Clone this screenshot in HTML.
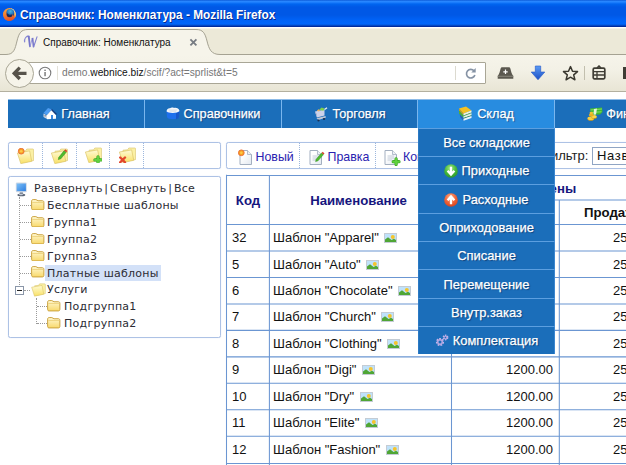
<!DOCTYPE html>
<html lang="ru">
<head>
<meta charset="utf-8">
<title>Справочник: Номенклатура</title>
<style>
html,body{margin:0;padding:0;}
body{width:626px;height:465px;overflow:hidden;position:relative;background:#fff;font-family:"Liberation Sans",sans-serif;}
.abs{position:absolute;}
#titlebar{left:0;top:0;width:626px;height:27px;background:linear-gradient(to bottom,#0a58d6 0px,#2a88ff 1.3px,#1a7cfc 2.5px,#0066f0 4px,#0058e6 7px,#0058e6 15px,#0062f6 20px,#0066fa 24px,#0450d0 25.2px,#002a9c 26.4px,#0030a8 27px);}
#titletext{left:20px;top:8px;color:#fff;font-weight:bold;font-size:12.7px;line-height:15px;white-space:nowrap;text-shadow:1px 1px 0 #0a2a8c;transform:scaleX(.933);transform-origin:0 0;}
#tabstrip{left:0;top:27px;width:626px;height:28px;background:linear-gradient(to bottom,#ffffff 0,#ffffff 1px,#f3f1e6 1.6px,#ece9d8 2.2px,#ece9d8 100%);}
#tabtext{left:43px;top:37px;font-size:10px;line-height:12px;color:#111;white-space:nowrap;}
#navbar{left:0;top:55px;width:626px;height:37px;background:linear-gradient(to bottom,#f6f4ea 0,#f3f1e6 40%,#e8e5d5 100%);border-bottom:1px solid #b3b0a0;box-sizing:border-box;}
#urlbar{left:28px;top:62px;width:458px;height:22px;background:#fff;border:1px solid #a9a696;box-sizing:border-box;border-radius:1px;}
#back{left:4.5px;top:58.5px;width:29px;height:29px;border-radius:50%;background:#f6f4ea;border:1px solid #a9a695;box-sizing:border-box;}
#urltext{left:62px;top:67px;font-size:10.2px;line-height:12px;color:#777;white-space:nowrap;}
#urltext b{font-weight:normal;color:#111;}
/* page */
#menu{left:8px;top:99px;width:618px;height:29px;background:#1b6eba;border-top:1px solid #8dbbe8;box-sizing:border-box;}
.mi{position:absolute;top:0;height:28px;width:137px;box-sizing:border-box;border-right:1px solid #7ab6ee;color:#fff;font-size:12.7px;line-height:28px;text-align:center;white-space:nowrap;text-shadow:1px 1px 1px rgba(0,25,70,.55);-webkit-text-stroke:.25px #fff;}
.box{position:absolute;border-radius:2.5px;box-shadow:0 0 1px #c6d4ee;border:1px solid #adc2e5;box-sizing:border-box;background:#fff;}
.tb{position:absolute;top:0;height:100%;border-right:1px dotted #9db7dd;box-sizing:border-box;}
.tr{position:absolute;white-space:nowrap;line-height:17px;height:16px;font-family:"DejaVu Sans","Liberation Sans",sans-serif;font-size:11px;letter-spacing:.26px;color:#2b2b33;}
#grid{left:226px;top:175px;width:400px;height:290px;}
.tt{font-size:12.4px;line-height:16px;color:#2a22b0;white-space:nowrap;}
.pp{margin:0 1.7px;}
.hl{position:absolute;height:1px;background:#5b8fd3;}
.vl{position:absolute;width:1px;background:#5b8fd3;}
.c{position:absolute;font-size:13px;line-height:16px;color:#111;white-space:nowrap;}
.hd{position:absolute;font-size:13.2px;font-weight:bold;line-height:16px;color:#16167e;white-space:nowrap;}
#dd{left:418px;top:128px;width:137px;height:226px;background:#1b6eba;}
.di{position:absolute;left:0;width:137px;color:#fff;font-size:12.9px;text-align:center;white-space:nowrap;border-top:1px solid #5c9fe0;border-left:1px solid #2b79c4;border-right:1px solid #3a86cf;box-sizing:border-box;text-shadow:1px 1px 1px rgba(0,25,70,.55);-webkit-text-stroke:.25px #fff;}
</style>
</head>
<body>
<div id="titlebar" class="abs"></div>
<svg class="abs" style="left:1.600px;top:6.700px" width="15" height="15" viewBox="0 0 15 15">
  <defs>
    <radialGradient id="ffg" cx="0.5" cy="0.3" r="0.7"><stop offset="0" stop-color="#4ab4e0"/><stop offset="0.55" stop-color="#2278c0"/><stop offset="1" stop-color="#142a6c"/></radialGradient>
    <linearGradient id="ffo" x1="0.2" y1="0" x2="0.5" y2="1"><stop offset="0" stop-color="#f7a03a"/><stop offset="0.5" stop-color="#f07a2e"/><stop offset="1" stop-color="#e2522a"/></linearGradient>
    <linearGradient id="ffy" x1="0" y1="0" x2="0" y2="1"><stop offset="0" stop-color="#fdf6c8"/><stop offset="1" stop-color="#f4b63a"/></linearGradient>
  </defs>
  <circle cx="7.500" cy="7.500" r="6.400" fill="url(#ffo)"/>
  <path d="M9 1.300 A6.400 6.400 0 0 1 12.800 11 C12.800 7.500 11.800 4 9 1.300 Z" fill="url(#ffy)"/>
  <circle cx="8.300" cy="6" r="4" fill="url(#ffg)"/>
  <path d="M4.300 6.500 C5.500 6.200 6.500 6.800 7 7.800 C8 8 9.500 7.800 10.500 7 C10.800 9 9.500 10.600 7.500 10.600 C5.500 10.600 4.200 9 4.300 6.500 Z" fill="#1a2350" opacity=".85"/>
  <path d="M1.300 6 C1.800 3.800 3.200 2.400 4.800 1.900 C4.200 2.800 4.100 3.600 4.300 4.300 C4 5 3.900 5.800 4.300 6.500 C4.200 9 5.500 10.600 7.500 10.600 C9.500 10.600 10.800 9 10.500 7 C11.600 8 11.800 9.800 11 11.300 C10 13 8.300 13.900 6.500 13.800 C3.300 13.500 .9 10.500 1.300 6 Z" fill="url(#ffo)"/>
</svg>
<div id="titletext" class="abs">Справочник: Номенклатура - Mozilla Firefox</div>
<div id="tabstrip" class="abs"></div>
<svg class="abs" style="left:0;top:27px" width="240" height="28" viewBox="0 0 240 28">
  <path d="M0 27.500 H6 C14 27.500 15 22 17 14 C19 6 21 2.500 28 2.500 H196 C203 2.500 205 6 207 14 C209 22 211 27.500 220 27.500 H240 V28 H0 Z" fill="#f6f4ea"/>
  <path d="M0 27.500 H6 C14 27.500 15 22 17 14 C19 6 21 2.500 28 2.500 H196 C203 2.500 205 6 207 14 C209 22 211 27.500 220 27.500 H240" fill="none" stroke="#a5a292" stroke-width="1"/>
</svg>
<div class="abs" style="left:238px;top:54px;width:388px;height:1px;background:#a5a292"></div>
<svg class="abs" style="left:23px;top:35px" width="15" height="13" viewBox="0 0 15 13">
  <path d="M1.600 6.800 C1.300 3.500 3.300 1.300 5.200 1" fill="none" stroke="#8a8ad4" stroke-width="1.300" stroke-linecap="round"/>
  <path d="M4.700 1 L6.700 .8 L7.700 12 L6.200 12.200 Z" fill="#7676ca"/>
  <path d="M7 12 L9.300 3" stroke="#8f8fd8" stroke-width=".9" fill="none"/>
  <path d="M8.700 3 L10.400 2.800 L11.200 12 L9.800 12.200 Z" fill="#7676ca"/>
  <path d="M10.600 12 L14 1.800" stroke="#8080d0" stroke-width="1.100" fill="none" stroke-linecap="round"/>
</svg>
<div id="tabtext" class="abs">Справочник: Номенклатура</div>
<svg class="abs" style="left:189px;top:38px" width="9" height="9" viewBox="0 0 9 9"><path d="M1.400 1.400 L7.400 7.400 M7.400 1.400 L1.400 7.400" stroke="#777c83" stroke-width="1.800" fill="none"/></svg>
<div id="navbar" class="abs"></div>
<div id="urlbar" class="abs"></div>
<div class="abs" style="left:455px;top:66px;width:1px;height:14px;background:#dcdad0"></div>
<div class="abs" style="left:57px;top:66px;width:1px;height:14px;background:#e4e2d8"></div>
<div id="back" class="abs"></div>
<svg class="abs" style="left:12px;top:66px" width="16" height="15" viewBox="0 0 16 15"><path d="M7.800 1.600 L2.200 7.300 L7.800 13 M3 7.300 H14.500" fill="none" stroke="#57534b" stroke-width="3.300" stroke-linejoin="miter"/></svg>
<svg class="abs" style="left:38px;top:66px" width="14" height="14" viewBox="0 0 14 14"><circle cx="7" cy="7" r="5.800" fill="none" stroke="#7a7a7a" stroke-width="1.100"/><rect x="6.400" y="6" width="1.300" height="4.200" fill="#6a6a6a"/><rect x="6.400" y="3.600" width="1.300" height="1.400" fill="#6a6a6a"/></svg>
<div id="urltext" class="abs">demo.<b>webnice.biz</b>/scif/?act=sprlist&amp;t=5</div>
<svg class="abs" style="left:463.5px;top:66.5px" width="13" height="13" viewBox="0 0 14 14"><path d="M10.800 4.200 A4.600 4.600 0 1 0 11.700 8.600" fill="none" stroke="#8592a4" stroke-width="1.800"/><path d="M12.600 1.200 V6 H7.800 Z" fill="#8592a4"/></svg>
<svg class="abs" style="left:497px;top:66px" width="17" height="14" viewBox="0 0 17 14"><path d="M5.200 1.300 H11.800 C12.800 1.300 13.200 1.900 13.500 3 C14 5.500 14.800 8 16.300 10 V12.700 H.7 V10 C2.200 8 3 5.500 3.500 3 C3.800 1.900 4.200 1.300 5.200 1.300 Z" fill="#5b584f"/><rect x=".7" y="9.800" width="15.600" height=".9" fill="#8d8a7f"/><path d="M8.500 3.600 V8 M6.300 5.800 H10.700" stroke="#fff" stroke-width="1.200"/></svg>
<svg class="abs" style="left:530px;top:65px" width="16" height="16" viewBox="0 0 16 16"><defs><linearGradient id="dlg" x1="0" y1="0" x2="0" y2="1"><stop offset="0" stop-color="#5b9bf5"/><stop offset="1" stop-color="#1b4fc4"/></linearGradient></defs><path d="M5.300 1 H10.700 V7 H14.800 L8 14.800 L1.200 7 H5.300 Z" fill="url(#dlg)" stroke="#2458c8" stroke-width=".6"/></svg>
<svg class="abs" style="left:562px;top:65px" width="17" height="16" viewBox="0 0 17 16"><path d="M8.500 1.600 L10.500 6.200 L15.500 6.600 L11.700 9.900 L12.900 14.800 L8.500 12.200 L4.100 14.800 L5.300 9.900 L1.500 6.600 L6.500 6.200 Z" fill="none" stroke="#3a382f" stroke-width="1.500" stroke-linejoin="round"/></svg>
<div class="abs" style="left:584px;top:66px;width:1px;height:14px;background:#c2bfae"></div>
<svg class="abs" style="left:592px;top:65px" width="14" height="15" viewBox="0 0 14 15"><rect x="1.200" y="3.200" width="11.600" height="10.600" rx="1.200" fill="none" stroke="#3f3d35" stroke-width="1.700"/><path d="M5 3 L7 1 L9 3" fill="none" stroke="#3f3d35" stroke-width="1.500"/><path d="M2 6.700 H12 M2 10 H12 M5 6.700 V13" stroke="#3f3d35" stroke-width="1.300" fill="none"/></svg>
<div class="abs" style="left:623px;top:67px;width:3px;height:12px;background:#3f3d35"></div>

<div id="menu" class="abs">
  <div class="mi" style="left:0;width:137px"><svg width="15" height="13" viewBox="0 0 15 13" style="vertical-align:-2px;margin-right:4px"><path d="M1.500 6 L6 1 L10 2.500 L5 8 Z" fill="#4f9df2"/><path d="M1.500 6.500 L5 8.500 V12 L1.500 10 Z" fill="#d0d8e6"/><rect x="2.500" y="8" width="1.300" height="1.500" fill="#7a8698"/><path d="M5 8 L9.500 3 L14 8 V11.800 L5 12.300 Z" fill="#fff"/><rect x="9" y="8" width="2" height="4" fill="#3d8ae0"/><path d="M9.500 2.500 L14.500 7.500" stroke="#173a7a" stroke-width="1.200"/></svg>Главная</div>
  <div class="mi" style="left:137px;width:137px"><svg width="14" height="13" viewBox="0 0 14 13" style="vertical-align:-2px;margin-right:4px"><path d="M.5 4.500 C.5 2.500 13.500 2.500 13.500 4.500 L13 10 C12.500 13 1.500 13 1 10 Z" fill="#1f70ec"/><path d="M10 6 L13.500 4.500 L13 10 C12.800 11.300 11.500 12 10 12.300 Z" fill="#1858c8"/><path d="M.5 4.300 C.8 1.800 3 .8 4 1.300 C5 .3 7 .4 8 1 C10 .4 13 1.200 13.500 4 C12 6.500 2 6.500 .5 4.300 Z" fill="#f4f7fb"/><path d="M2.500 3 H11 M3.500 4.200 H10" stroke="#c8d0dc" stroke-width=".6"/></svg>Справочники</div>
  <div class="mi" style="left:274px;width:136px"><svg width="14" height="16" viewBox="0 0 14 16" style="vertical-align:-4px;margin-right:5px"><path d="M1 5.500 L10.500 3.500 L10.500 9.500 L3 11.500 Z" fill="#ccd2ea"/><path d="M1 5.500 L3 11.500 L3 8 Z" fill="#aab2d0"/><path d="M5 4 L7.500 1.500 L10.500 2.500 L9.500 4.800 Z" fill="#7ed048"/><path d="M2.800 4.800 L4.500 3.300 L6 4.200 L5 5.500 Z" fill="#f0b060"/><path d="M10.500 3.500 L13 1.800" stroke="#eef0f6" stroke-width="1.300"/><path d="M2.500 12.300 L11.500 10 L12 11.500 L4.500 14 Z" fill="#c2c8d6"/><circle cx="4.500" cy="14.500" r="1.100" fill="#1c3050"/><circle cx="10" cy="13" r="1.100" fill="#1c3050"/></svg>Торговля</div>
  <div class="mi" style="left:410px;width:137px;background:#288ce0"><svg width="15" height="16" viewBox="0 0 15 16" style="vertical-align:-4px;margin-right:4px"><path d="M1 2.500 L8 .5 L13.500 4.500 L5.500 7.500 Z" fill="#f4c224"/><path d="M1 2.500 L5.500 7.500 V9.500 L1 4.500 Z" fill="#d9a010"/><path d="M1 4.500 L5.500 9.500 V12 L1 7.500 Z" fill="#4caf38"/><path d="M1.500 8 L5.500 12 V14.800 L2.500 11.500 Z" fill="#2a62b8"/><path d="M5.500 7.500 L13.500 4.500 V6.500 L5.500 9.500 Z" fill="#f6f2dc"/><path d="M5.500 9.500 L13.500 6.500 V7.300 L5.500 10.300 Z" fill="#5aa838"/><path d="M5.500 10.300 L13.500 7.300 V9.300 L5.500 12 Z" fill="#e8f0e0"/><path d="M5.500 12 L13.500 9.300 V10 L5.500 12.800 Z" fill="#3a8a30"/><path d="M5.500 12.800 L13.500 10 V12 L5.500 14.800 Z" fill="#f0f4fa"/></svg>Склад</div>
  <div class="mi" style="left:547px;width:137px;border-right:none"><svg width="16" height="14" viewBox="0 0 16 14" style="vertical-align:-3px;margin-right:3px"><path d="M3 1.500 L15 .5 L15.500 5 L13 7.500 L4 8 Z" fill="#3fb82f"/><path d="M3.500 3 L15 2 M4 5.500 L14.500 4.800" stroke="#8ae070" stroke-width=".9"/><path d="M7 2 L10 1.500 L9 7.500 L6.500 7.800 Z" fill="#e4f4dc"/><ellipse cx="3.800" cy="12" rx="3.300" ry="1.800" fill="#d89a12"/><ellipse cx="3.800" cy="11.300" rx="3.300" ry="1.800" fill="#f8d040"/><ellipse cx="7" cy="10.200" rx="2.800" ry="1.500" fill="#d89a12"/><ellipse cx="7" cy="9.600" rx="2.800" ry="1.500" fill="#fbd84a"/><ellipse cx="4.300" cy="8" rx="2.500" ry="1.500" fill="#e8b020"/><ellipse cx="4.300" cy="6" rx="1.800" ry="1.300" fill="#f0c030"/></svg>Финансы</div>
</div>
<div class="box" style="left:8px;top:142px;width:213px;height:27px">
  <div class="tb" style="left:0px;width:34px"></div>
  <div class="tb" style="left:34px;width:34px"></div>
  <div class="tb" style="left:68px;width:33px"></div>
  <div class="tb" style="left:101px;width:34px"></div>
</div>
<svg class="abs" style="left:17.4px;top:147.6px" width="17" height="16" viewBox="0 0 17 16"><defs><linearGradient id="og" x1="0" y1="0" x2="0" y2="1"><stop offset="0" stop-color="#fffbd6"/><stop offset="1" stop-color="#f8e066"/></linearGradient></defs><path d="M4 3.200 L8.600 2.800 L9.800 1 L15.800 1 C16.300 1 16.600 1.300 16.600 1.800 L16.600 12.500 L5.500 14.800 Z" fill="#fbf0a4" stroke="#dcc878" stroke-width=".7"/><path d="M.4 5 L12.600 2.900 L14.800 13.300 L3.800 15.600 Z" fill="url(#og)" stroke="#dcc56a" stroke-width=".7"/><circle cx="4.200" cy="3.200" r="2.900" fill="#f7a01f" stroke="#ea6e3c" stroke-width=".9"/><circle cx="4.200" cy="3.200" r="1.300" fill="#fcc94a"/></svg>
<svg class="abs" style="left:51px;top:147.6px" width="17" height="16" viewBox="0 0 17 16"><defs><linearGradient id="og" x1="0" y1="0" x2="0" y2="1"><stop offset="0" stop-color="#fffbd6"/><stop offset="1" stop-color="#f8e066"/></linearGradient></defs><path d="M4 3.200 L8.600 2.800 L9.800 1 L15.800 1 C16.300 1 16.600 1.300 16.600 1.800 L16.600 12.500 L5.500 14.800 Z" fill="#fbf0a4" stroke="#dcc878" stroke-width=".7"/><path d="M.4 5 L12.600 2.900 L14.800 13.300 L3.800 15.600 Z" fill="url(#og)" stroke="#dcc56a" stroke-width=".7"/><path d="M7.800 9.300 L13.200 2.600 L15.200 4.300 L9.800 10.800 L7.300 11.600 Z" fill="#4fbb2e" stroke="#2f8a1c" stroke-width=".5"/><path d="M13.200 2.600 L14.400 1.200 L16.400 2.900 L15.200 4.300 Z" fill="#d8402a"/></svg>
<svg class="abs" style="left:84.5px;top:147px" width="17" height="16" viewBox="0 0 17 16"><defs><linearGradient id="og" x1="0" y1="0" x2="0" y2="1"><stop offset="0" stop-color="#fffbd6"/><stop offset="1" stop-color="#f8e066"/></linearGradient></defs><path d="M4 3.200 L8.600 2.800 L9.800 1 L15.800 1 C16.300 1 16.600 1.300 16.600 1.800 L16.600 12.500 L5.500 14.800 Z" fill="#fbf0a4" stroke="#dcc878" stroke-width=".7"/><path d="M.4 5 L12.600 2.900 L14.800 13.300 L3.800 15.600 Z" fill="url(#og)" stroke="#dcc56a" stroke-width=".7"/><path d="M13 9.800 V16 M9.900 12.900 H16.100" stroke="#3aa524" stroke-width="3.200" stroke-linecap="round"/><path d="M13 9.800 V16 M9.900 12.900 H16.100" stroke="#5fd13e" stroke-width="2" stroke-linecap="round"/></svg>
<svg class="abs" style="left:119px;top:147px" width="17" height="16" viewBox="0 0 17 16"><defs><linearGradient id="og" x1="0" y1="0" x2="0" y2="1"><stop offset="0" stop-color="#fffbd6"/><stop offset="1" stop-color="#f8e066"/></linearGradient></defs><path d="M4 3.200 L8.600 2.800 L9.800 1 L15.800 1 C16.300 1 16.600 1.300 16.600 1.800 L16.600 12.500 L5.500 14.800 Z" fill="#fbf0a4" stroke="#dcc878" stroke-width=".7"/><path d="M.4 5 L12.600 2.900 L14.800 13.300 L3.800 15.600 Z" fill="url(#og)" stroke="#dcc56a" stroke-width=".7"/><path d="M1.200 10.500 L6 15.300 M6 10.500 L1.200 15.300" stroke="#e2472c" stroke-width="2.400" stroke-linecap="round"/></svg>
<div class="box" style="left:226px;top:142px;width:410px;height:27px">
  <div class="tb" style="left:0;width:73px"></div>
  <div class="tb" style="left:73px;width:76px"></div>
</div>
<svg class="abs" style="left:238px;top:148.5px" width="18" height="17" viewBox="0 0 18 17"><defs><linearGradient id="pg" x1="0" y1="0" x2="1" y2="1"><stop offset="0.3" stop-color="#ffffff"/><stop offset="1" stop-color="#e2e8f0"/></linearGradient></defs><path d="M2 1.500 H9.500 L13.500 5.500 V15.500 H2 Z" fill="url(#pg)" stroke="#a3afc0" stroke-width="1"/><path d="M9.500 1.500 V5.500 H13.500" fill="#eef1f6" stroke="#a3afc0" stroke-width=".8"/><circle cx="3.300" cy="3.800" r="2.900" fill="#f7a01f" stroke="#ea6e3c" stroke-width=".9"/><circle cx="3.300" cy="3.800" r="1.300" fill="#fcc94a"/></svg>
<div class="tt abs" style="left:255.5px;top:149px">Новый</div>
<svg class="abs" style="left:307.5px;top:148.5px" width="18" height="17" viewBox="0 0 18 17"><defs><linearGradient id="pg" x1="0" y1="0" x2="1" y2="1"><stop offset="0.3" stop-color="#ffffff"/><stop offset="1" stop-color="#e2e8f0"/></linearGradient></defs><path d="M2 1.500 H9.500 L13.500 5.500 V15.500 H2 Z" fill="url(#pg)" stroke="#a3afc0" stroke-width="1"/><path d="M9.500 1.500 V5.500 H13.500" fill="#eef1f6" stroke="#a3afc0" stroke-width=".8"/><path d="M4.500 7 H11 M4.500 9 H11 M4.500 11 H9" stroke="#b8c2d0" stroke-width=".8"/><path d="M8.200 10.200 L13.600 4 L15.400 5.600 L10 11.800 L7.600 12.600 Z" fill="#4fbb2e" stroke="#2f8a1c" stroke-width=".5"/><path d="M13.600 4 L14.700 2.800 L16.500 4.400 L15.400 5.600 Z" fill="#d8402a"/></svg>
<div class="tt abs" style="left:327.500px;top:149px">Правка</div>
<svg class="abs" style="left:382.5px;top:148.5px" width="18" height="17" viewBox="0 0 18 17"><defs><linearGradient id="pg" x1="0" y1="0" x2="1" y2="1"><stop offset="0.3" stop-color="#ffffff"/><stop offset="1" stop-color="#e2e8f0"/></linearGradient></defs><path d="M2 1.500 H9.500 L13.500 5.500 V15.500 H2 Z" fill="url(#pg)" stroke="#a3afc0" stroke-width="1"/><path d="M9.500 1.500 V5.500 H13.500" fill="#eef1f6" stroke="#a3afc0" stroke-width=".8"/><path d="M4.500 7 H11 M4.500 9 H11 M4.500 11 H9" stroke="#b8c2d0" stroke-width=".8"/><path d="M13.100 9.800 V15.600 M10.200 12.700 H16" stroke="#3aa524" stroke-width="3.200" stroke-linecap="round"/><path d="M13.100 9.800 V15.600 M10.200 12.700 H16" stroke="#5fd13e" stroke-width="2" stroke-linecap="round"/></svg>
<div class="tt abs" style="left:403px;top:149px">Копия</div>
<div class="abs" style="left:541px;top:148px;font-size:13px;line-height:16px;color:#222;white-space:nowrap">Фильтр:</div>
<div class="abs" style="left:592px;top:147px;width:60px;height:18px;border:1px solid #8fa5c4;box-sizing:border-box;background:#fff;font-size:13px;letter-spacing:.7px;line-height:16px;padding-left:4px;color:#111;white-space:nowrap;overflow:hidden">Название</div>
<div class="box" id="tree" style="left:8px;top:176px;width:213px;height:162px"></div>
<div id="treec" class="abs" style="left:0;top:0">
<div class="abs" style="left:19px;top:197px;width:0;height:88px;border-left:1px dotted #9a9a9a"></div>
<div class="abs" style="left:20px;top:205px;width:11px;height:0;border-top:1px dotted #9a9a9a"></div>
<div class="abs" style="left:20px;top:222px;width:11px;height:0;border-top:1px dotted #9a9a9a"></div>
<div class="abs" style="left:20px;top:239px;width:11px;height:0;border-top:1px dotted #9a9a9a"></div>
<div class="abs" style="left:20px;top:256px;width:11px;height:0;border-top:1px dotted #9a9a9a"></div>
<div class="abs" style="left:20px;top:273px;width:11px;height:0;border-top:1px dotted #9a9a9a"></div>
<div class="abs" style="left:24px;top:290px;width:6px;height:0;border-top:1px dotted #9a9a9a"></div>
<div class="abs" style="left:36px;top:298px;width:0;height:26px;border-left:1px dotted #9a9a9a"></div>
<div class="abs" style="left:37px;top:306px;width:10px;height:0;border-top:1px dotted #9a9a9a"></div>
<div class="abs" style="left:37px;top:323px;width:10px;height:0;border-top:1px dotted #9a9a9a"></div>
<svg class="abs" style="left:15px;top:182px" width="13" height="15" viewBox="0 0 13 15"><defs><linearGradient id="mg" x1="0" y1="0" x2="1" y2="1"><stop offset="0" stop-color="#7cc0f8"/><stop offset="1" stop-color="#2f7fe0"/></linearGradient></defs><rect x=".8" y=".6" width="11" height="9.600" rx="1.200" fill="#cfd8e4"/><rect x="1.700" y="1.500" width="9.200" height="7.600" fill="url(#mg)"/><path d="M4.800 10.200 H7.800 L8.300 12.300 H4.300 Z" fill="#8a94a4"/><ellipse cx="6.300" cy="13" rx="4" ry="1.300" fill="#5a6474"/><ellipse cx="6" cy="12.600" rx="2.500" ry=".7" fill="#c8d0dc"/></svg>
<div class="tr" style="left:34px;top:180px">Развернуть<span class="pp">|</span>Свернуть<span class="pp">|</span>Все</div>
<svg class="abs" style="left:31px;top:198.6px" width="13.500" height="11.500" viewBox="0 0 14 12"><defs><linearGradient id="fg" x1="0" y1="0" x2="0" y2="1"><stop offset="0" stop-color="#fff8d2"/><stop offset="1" stop-color="#f8d96c"/></linearGradient></defs><path d="M.6 2.200 C.6 1.200 1.200 .6 2.200 .6 H5 C6 .6 6.300 1.800 7.300 1.800 H11.800 C12.800 1.800 13.400 2.400 13.400 3.400 V9.800 C13.400 10.800 12.800 11.400 11.800 11.400 H2.200 C1.200 11.400 .6 10.800 .6 9.800 Z" fill="url(#fg)" stroke="#c9a03c" stroke-width="1"/><path d="M1.300 3.600 H12.700" stroke="#e8c866" stroke-width=".7"/></svg>
<div class="tr" style="left:47px;top:196.7px">Бесплатные шаблоны</div>
<svg class="abs" style="left:31px;top:215.5px" width="13.500" height="11.500" viewBox="0 0 14 12"><defs><linearGradient id="fg" x1="0" y1="0" x2="0" y2="1"><stop offset="0" stop-color="#fff8d2"/><stop offset="1" stop-color="#f8d96c"/></linearGradient></defs><path d="M.6 2.200 C.6 1.200 1.200 .6 2.200 .6 H5 C6 .6 6.300 1.800 7.300 1.800 H11.800 C12.800 1.800 13.400 2.400 13.400 3.400 V9.800 C13.400 10.800 12.800 11.400 11.800 11.400 H2.200 C1.200 11.400 .6 10.800 .6 9.800 Z" fill="url(#fg)" stroke="#c9a03c" stroke-width="1"/><path d="M1.300 3.600 H12.700" stroke="#e8c866" stroke-width=".7"/></svg>
<div class="tr" style="left:47px;top:213.7px">Группа1</div>
<svg class="abs" style="left:31px;top:232.5px" width="13.500" height="11.500" viewBox="0 0 14 12"><defs><linearGradient id="fg" x1="0" y1="0" x2="0" y2="1"><stop offset="0" stop-color="#fff8d2"/><stop offset="1" stop-color="#f8d96c"/></linearGradient></defs><path d="M.6 2.200 C.6 1.200 1.200 .6 2.200 .6 H5 C6 .6 6.300 1.800 7.300 1.800 H11.800 C12.800 1.800 13.400 2.400 13.400 3.400 V9.800 C13.400 10.800 12.800 11.400 11.800 11.400 H2.200 C1.200 11.400 .6 10.800 .6 9.800 Z" fill="url(#fg)" stroke="#c9a03c" stroke-width="1"/><path d="M1.300 3.600 H12.700" stroke="#e8c866" stroke-width=".7"/></svg>
<div class="tr" style="left:47px;top:230.6px">Группа2</div>
<svg class="abs" style="left:31px;top:249.5px" width="13.500" height="11.500" viewBox="0 0 14 12"><defs><linearGradient id="fg" x1="0" y1="0" x2="0" y2="1"><stop offset="0" stop-color="#fff8d2"/><stop offset="1" stop-color="#f8d96c"/></linearGradient></defs><path d="M.6 2.200 C.6 1.200 1.200 .6 2.200 .6 H5 C6 .6 6.300 1.800 7.300 1.800 H11.800 C12.800 1.800 13.400 2.400 13.400 3.400 V9.800 C13.400 10.800 12.800 11.400 11.800 11.400 H2.200 C1.200 11.400 .6 10.800 .6 9.800 Z" fill="url(#fg)" stroke="#c9a03c" stroke-width="1"/><path d="M1.300 3.600 H12.700" stroke="#e8c866" stroke-width=".7"/></svg>
<div class="tr" style="left:47px;top:247.6px">Группа3</div>
<svg class="abs" style="left:31px;top:266.4px" width="13.500" height="11.500" viewBox="0 0 14 12"><defs><linearGradient id="fg" x1="0" y1="0" x2="0" y2="1"><stop offset="0" stop-color="#fff8d2"/><stop offset="1" stop-color="#f8d96c"/></linearGradient></defs><path d="M.6 2.200 C.6 1.200 1.200 .6 2.200 .6 H5 C6 .6 6.300 1.800 7.300 1.800 H11.800 C12.800 1.800 13.400 2.400 13.400 3.400 V9.800 C13.400 10.800 12.800 11.400 11.800 11.400 H2.200 C1.200 11.400 .6 10.800 .6 9.800 Z" fill="url(#fg)" stroke="#c9a03c" stroke-width="1"/><path d="M1.300 3.600 H12.700" stroke="#e8c866" stroke-width=".7"/></svg>
<div class="tr" style="left:47px;top:264.5px;background:#d3e1f8;padding:0 2px;margin-left:-2px">Платные шаблоны</div>
<div class="abs" style="left:15px;top:286px;width:9px;height:9px;box-sizing:border-box;border:1px solid #8a96a8;background:#fff"></div>
<div class="abs" style="left:17px;top:290px;width:5px;height:1px;background:#222"></div>
<svg class="abs" style="left:30.5px;top:283.1px" width="15" height="13.5" viewBox="0 0 17 16"><defs><linearGradient id="og" x1="0" y1="0" x2="0" y2="1"><stop offset="0" stop-color="#fffbd6"/><stop offset="1" stop-color="#f8e066"/></linearGradient></defs><path d="M4 3.200 L8.600 2.800 L9.800 1 L15.800 1 C16.300 1 16.600 1.300 16.600 1.800 L16.600 12.500 L5.500 14.800 Z" fill="#fbf0a4" stroke="#dcc878" stroke-width=".7"/><path d="M.4 5 L12.600 2.900 L14.800 13.300 L3.800 15.600 Z" fill="url(#og)" stroke="#dcc56a" stroke-width=".7"/></svg>
<div class="tr" style="left:47px;top:281.4px">Услуги</div>
<svg class="abs" style="left:47px;top:300.3px" width="13.500" height="11.500" viewBox="0 0 14 12"><defs><linearGradient id="fg" x1="0" y1="0" x2="0" y2="1"><stop offset="0" stop-color="#fff8d2"/><stop offset="1" stop-color="#f8d96c"/></linearGradient></defs><path d="M.6 2.200 C.6 1.200 1.200 .6 2.200 .6 H5 C6 .6 6.300 1.800 7.300 1.800 H11.800 C12.800 1.800 13.400 2.400 13.400 3.400 V9.800 C13.400 10.800 12.800 11.400 11.800 11.400 H2.200 C1.200 11.400 .6 10.800 .6 9.800 Z" fill="url(#fg)" stroke="#c9a03c" stroke-width="1"/><path d="M1.300 3.600 H12.700" stroke="#e8c866" stroke-width=".7"/></svg>
<div class="tr" style="left:64px;top:298.4px">Подгруппа1</div>
<svg class="abs" style="left:47px;top:317.3px" width="13.500" height="11.500" viewBox="0 0 14 12"><defs><linearGradient id="fg" x1="0" y1="0" x2="0" y2="1"><stop offset="0" stop-color="#fff8d2"/><stop offset="1" stop-color="#f8d96c"/></linearGradient></defs><path d="M.6 2.200 C.6 1.200 1.200 .6 2.200 .6 H5 C6 .6 6.300 1.800 7.300 1.800 H11.800 C12.800 1.800 13.400 2.400 13.400 3.400 V9.800 C13.400 10.800 12.800 11.400 11.800 11.400 H2.200 C1.200 11.400 .6 10.800 .6 9.800 Z" fill="url(#fg)" stroke="#c9a03c" stroke-width="1"/><path d="M1.300 3.600 H12.700" stroke="#e8c866" stroke-width=".7"/></svg>
<div class="tr" style="left:64px;top:315.4px">Подгруппа2</div>
</div>
<div id="grid" class="abs" style="left:0;top:0;width:626px;height:465px">
<svg class="abs" style="left:0;top:0" width="626" height="465" viewBox="0 0 626 465"><g stroke="#6b96d2" stroke-width="1.050" fill="none"><path d="M226 175.400 H626 M451.500 199.900 H626"/><path d="M226 224.50 H626 M226 250.97 H626 M226 277.44 H626 M226 303.91 H626 M226 330.38 H626 M226 356.85 H626 M226 383.32 H626 M226 409.79 H626 M226 436.26 H626 M226 463.50 H626"/><path d="M226.500 174.800 V465 M269.400 175 V465 M451.500 175 V465 M559.300 199.900 V465"/></g></svg>
<div class="hd" style="left:226px;width:44px;text-align:center;top:193px">Код</div>
<div class="hd" style="left:267.500px;width:182px;text-align:center;top:193px">Наименование</div>
<div class="hd" style="left:452px;width:212px;text-align:center;top:180.500px">Цены</div>
<div class="hd" style="left:452px;width:107px;text-align:center;top:204px;color:#111">Опт</div>
<div class="hd" style="left:559.500px;width:107px;text-align:center;top:204.700px;color:#111">Продажа</div>
<div class="c" style="left:232px;top:230.0px">32</div>
<div class="c" style="left:273px;top:230.0px">Шаблон "Apparel"<svg width="13" height="10" viewBox="0 0 13 10" style="vertical-align:-1px;margin-left:5.500px"><rect x=".5" y=".5" width="12" height="9" fill="#bfe2fb" stroke="#c4ccd4" stroke-width="1"/><circle cx="8.800" cy="4" r="2" fill="#f5c42c"/><path d="M1 9 V6.500 L4 4.200 L7.500 7 L10 5.800 L12 7 V9 Z" fill="#4fa635"/></svg></div>
<div class="c" style="left:452px;width:101px;text-align:right;top:230.0px">1200.00</div>
<div class="c" style="left:559px;width:101px;text-align:right;top:230.0px">2500.00</div>
<div class="c" style="left:232px;top:256.5px">5</div>
<div class="c" style="left:273px;top:256.5px">Шаблон "Auto"<svg width="13" height="10" viewBox="0 0 13 10" style="vertical-align:-1px;margin-left:5.500px"><rect x=".5" y=".5" width="12" height="9" fill="#bfe2fb" stroke="#c4ccd4" stroke-width="1"/><circle cx="8.800" cy="4" r="2" fill="#f5c42c"/><path d="M1 9 V6.500 L4 4.200 L7.500 7 L10 5.800 L12 7 V9 Z" fill="#4fa635"/></svg></div>
<div class="c" style="left:452px;width:101px;text-align:right;top:256.5px">1200.00</div>
<div class="c" style="left:559px;width:101px;text-align:right;top:256.5px">2500.00</div>
<div class="c" style="left:232px;top:283.0px">6</div>
<div class="c" style="left:273px;top:283.0px">Шаблон "Chocolate"<svg width="13" height="10" viewBox="0 0 13 10" style="vertical-align:-1px;margin-left:5.500px"><rect x=".5" y=".5" width="12" height="9" fill="#bfe2fb" stroke="#c4ccd4" stroke-width="1"/><circle cx="8.800" cy="4" r="2" fill="#f5c42c"/><path d="M1 9 V6.500 L4 4.200 L7.500 7 L10 5.800 L12 7 V9 Z" fill="#4fa635"/></svg></div>
<div class="c" style="left:452px;width:101px;text-align:right;top:283.0px">1200.00</div>
<div class="c" style="left:559px;width:101px;text-align:right;top:283.0px">2500.00</div>
<div class="c" style="left:232px;top:309.4px">7</div>
<div class="c" style="left:273px;top:309.4px">Шаблон "Church"<svg width="13" height="10" viewBox="0 0 13 10" style="vertical-align:-1px;margin-left:5.500px"><rect x=".5" y=".5" width="12" height="9" fill="#bfe2fb" stroke="#c4ccd4" stroke-width="1"/><circle cx="8.800" cy="4" r="2" fill="#f5c42c"/><path d="M1 9 V6.500 L4 4.200 L7.500 7 L10 5.800 L12 7 V9 Z" fill="#4fa635"/></svg></div>
<div class="c" style="left:452px;width:101px;text-align:right;top:309.4px">1200.00</div>
<div class="c" style="left:559px;width:101px;text-align:right;top:309.4px">2500.00</div>
<div class="c" style="left:232px;top:335.9px">8</div>
<div class="c" style="left:273px;top:335.9px">Шаблон "Clothing"<svg width="13" height="10" viewBox="0 0 13 10" style="vertical-align:-1px;margin-left:5.500px"><rect x=".5" y=".5" width="12" height="9" fill="#bfe2fb" stroke="#c4ccd4" stroke-width="1"/><circle cx="8.800" cy="4" r="2" fill="#f5c42c"/><path d="M1 9 V6.500 L4 4.200 L7.500 7 L10 5.800 L12 7 V9 Z" fill="#4fa635"/></svg></div>
<div class="c" style="left:452px;width:101px;text-align:right;top:335.9px">1200.00</div>
<div class="c" style="left:559px;width:101px;text-align:right;top:335.9px">2500.00</div>
<div class="c" style="left:232px;top:362.4px">9</div>
<div class="c" style="left:273px;top:362.4px">Шаблон "Digi"<svg width="13" height="10" viewBox="0 0 13 10" style="vertical-align:-1px;margin-left:5.500px"><rect x=".5" y=".5" width="12" height="9" fill="#bfe2fb" stroke="#c4ccd4" stroke-width="1"/><circle cx="8.800" cy="4" r="2" fill="#f5c42c"/><path d="M1 9 V6.500 L4 4.200 L7.500 7 L10 5.800 L12 7 V9 Z" fill="#4fa635"/></svg></div>
<div class="c" style="left:452px;width:101px;text-align:right;top:362.4px">1200.00</div>
<div class="c" style="left:559px;width:101px;text-align:right;top:362.4px">2500.00</div>
<div class="c" style="left:232px;top:388.9px">10</div>
<div class="c" style="left:273px;top:388.9px">Шаблон "Dry"<svg width="13" height="10" viewBox="0 0 13 10" style="vertical-align:-1px;margin-left:5.500px"><rect x=".5" y=".5" width="12" height="9" fill="#bfe2fb" stroke="#c4ccd4" stroke-width="1"/><circle cx="8.800" cy="4" r="2" fill="#f5c42c"/><path d="M1 9 V6.500 L4 4.200 L7.500 7 L10 5.800 L12 7 V9 Z" fill="#4fa635"/></svg></div>
<div class="c" style="left:452px;width:101px;text-align:right;top:388.9px">1200.00</div>
<div class="c" style="left:559px;width:101px;text-align:right;top:388.9px">2500.00</div>
<div class="c" style="left:232px;top:415.3px">11</div>
<div class="c" style="left:273px;top:415.3px">Шаблон "Elite"<svg width="13" height="10" viewBox="0 0 13 10" style="vertical-align:-1px;margin-left:5.500px"><rect x=".5" y=".5" width="12" height="9" fill="#bfe2fb" stroke="#c4ccd4" stroke-width="1"/><circle cx="8.800" cy="4" r="2" fill="#f5c42c"/><path d="M1 9 V6.500 L4 4.200 L7.500 7 L10 5.800 L12 7 V9 Z" fill="#4fa635"/></svg></div>
<div class="c" style="left:452px;width:101px;text-align:right;top:415.3px">1200.00</div>
<div class="c" style="left:559px;width:101px;text-align:right;top:415.3px">2500.00</div>
<div class="c" style="left:232px;top:441.8px">12</div>
<div class="c" style="left:273px;top:441.8px">Шаблон "Fashion"<svg width="13" height="10" viewBox="0 0 13 10" style="vertical-align:-1px;margin-left:5.500px"><rect x=".5" y=".5" width="12" height="9" fill="#bfe2fb" stroke="#c4ccd4" stroke-width="1"/><circle cx="8.800" cy="4" r="2" fill="#f5c42c"/><path d="M1 9 V6.500 L4 4.200 L7.500 7 L10 5.800 L12 7 V9 Z" fill="#4fa635"/></svg></div>
<div class="c" style="left:452px;width:101px;text-align:right;top:441.8px">1200.00</div>
<div class="c" style="left:559px;width:101px;text-align:right;top:441.8px">2500.00</div>
<div class="c" style="left:232px;top:468.3px">13</div>
<div class="c" style="left:273px;top:468.3px">Шаблон "Flowers"<svg width="13" height="10" viewBox="0 0 13 10" style="vertical-align:-1px;margin-left:5.500px"><rect x=".5" y=".5" width="12" height="9" fill="#bfe2fb" stroke="#c4ccd4" stroke-width="1"/><circle cx="8.800" cy="4" r="2" fill="#f5c42c"/><path d="M1 9 V6.500 L4 4.200 L7.500 7 L10 5.800 L12 7 V9 Z" fill="#4fa635"/></svg></div>
<div class="c" style="left:452px;width:101px;text-align:right;top:468.3px">1200.00</div>
<div class="c" style="left:559px;width:101px;text-align:right;top:468.3px">2500.00</div>
</div>
<div id="dd" class="abs">
  <div class="di" style="top:0px;height:28px;line-height:28px">Все складские</div>
  <div class="di" style="top:28px;height:28px;line-height:28px"><svg width="14" height="14" viewBox="0 0 14 14" style="vertical-align:-3px;margin-right:4px"><defs><radialGradient id="gi" cx=".45" cy=".3" r=".75"><stop offset="0" stop-color="#a6ea84"/><stop offset=".55" stop-color="#45b83a"/><stop offset="1" stop-color="#2a8f2c"/></radialGradient></defs><circle cx="7" cy="7" r="6.800" fill="url(#gi)"/><path d="M7 2.800 V9.500 M3.600 6.800 L7 10.500 L10.400 6.800" fill="none" stroke="#fff" stroke-width="2.300"/></svg>Приходные</div>
  <div class="di" style="top:56px;height:29px;line-height:29px"><svg width="14" height="14" viewBox="0 0 14 14" style="vertical-align:-3px;margin-right:4px"><defs><radialGradient id="go" cx=".45" cy=".3" r=".75"><stop offset="0" stop-color="#ffb08a"/><stop offset=".55" stop-color="#ef6236"/><stop offset="1" stop-color="#d0401c"/></radialGradient></defs><circle cx="7" cy="7" r="6.800" fill="url(#go)"/><path d="M7 11.200 V4.500 M3.600 7.200 L7 3.500 L10.400 7.200" fill="none" stroke="#fff" stroke-width="2.300"/></svg>Расходные</div>
  <div class="di" style="top:85px;height:28px;line-height:28px">Оприходование</div>
  <div class="di" style="top:113px;height:28px;line-height:28px">Списание</div>
  <div class="di" style="top:141px;height:29px;line-height:29px">Перемещение</div>
  <div class="di" style="top:170px;height:28px;line-height:28px">Внутр.заказ</div>
  <div class="di" style="top:198px;height:28px;line-height:28px"><svg width="14" height="13" viewBox="0 0 14 13" style="vertical-align:-2px;margin-right:4px"><circle cx="5" cy="8" r="3" fill="none" stroke="#c3b6ea" stroke-width="2.200" stroke-dasharray="1.600 1"/><circle cx="5" cy="8" r="2.300" fill="none" stroke="#b5a6e2" stroke-width="1.500"/><circle cx="10.500" cy="3.500" r="2" fill="none" stroke="#c3b6ea" stroke-width="1.800" stroke-dasharray="1.200 .8"/><circle cx="10.500" cy="3.500" r="1.500" fill="none" stroke="#b5a6e2" stroke-width="1.100"/></svg>Комплектация</div>
</div>
</body>
</html>
